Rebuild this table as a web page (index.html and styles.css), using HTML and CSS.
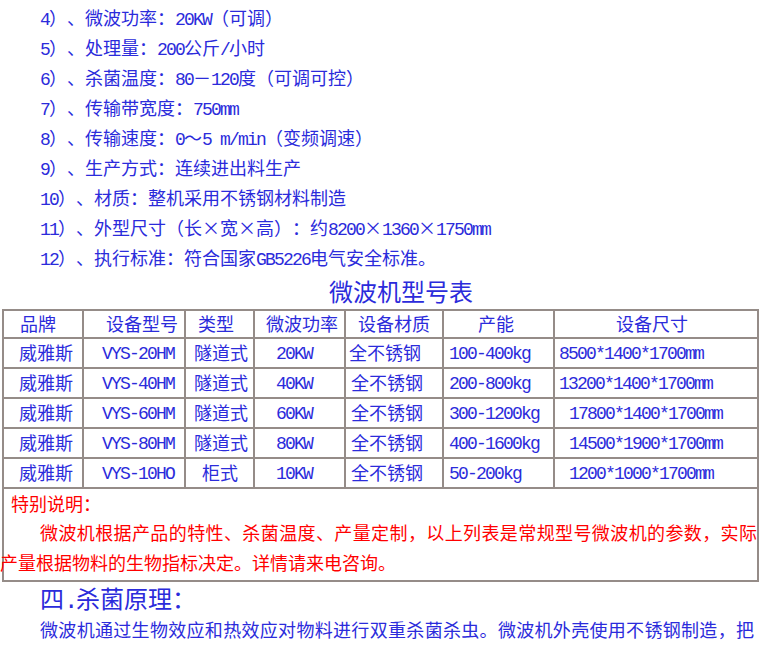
FILE: index.html
```html
<!DOCTYPE html>
<html lang="zh-CN">
<head>
<meta charset="utf-8">
<title>微波机型号表</title>
<link rel="stylesheet" href="styles.css">
</head>
<body>
<div class="specs">
  <p><span class="n">4</span>）、微波功率：<span class="n">20KW</span>（可调）</p>
  <p><span class="n">5</span>）、处理量：<span class="n">200</span>公斤<span class="n">/</span>小时</p>
  <p><span class="n">6</span>）、杀菌温度：<span class="n">80</span>－<span class="n">120</span>度（可调可控）</p>
  <p><span class="n">7</span>）、传输带宽度：<span class="n">750mm</span></p>
  <p><span class="n">8</span>）、传输速度：<span class="n">0</span>～<span class="n">5 m/min</span>（变频调速）</p>
  <p><span class="n">9</span>）、生产方式：连续进出料生产</p>
  <p><span class="n">10</span>）、材质：整机采用不锈钢材料制造</p>
  <p><span class="n">11</span>）、外型尺寸（长<span class="x">×</span>宽<span class="x">×</span>高）：约<span class="n">8200</span><span class="x">×</span><span class="n">1360</span><span class="x">×</span><span class="n">1750mm</span></p>
  <p><span class="n">12</span>）、执行标准：符合国家<span class="n">GB5226</span>电气安全标准。</p>
</div>
<h1 class="title">微波机型号表</h1>
<table class="models">
  <colgroup>
    <col class="c1"><col class="c2"><col class="c3"><col class="c4"><col class="c5"><col class="c6"><col class="c7">
  </colgroup>
  <tr class="head">
    <td>品牌</td><td>设备型号</td><td>类型</td><td>微波功率</td><td>设备材质</td><td>产能</td><td>设备尺寸</td>
  </tr>
  <tr>
    <td>威雅斯</td><td class="n">VYS-20HM</td><td>隧道式</td><td class="n">20KW</td><td>全不锈钢</td><td class="n">100-400kg</td><td class="n">8500*1400*1700mm</td>
  </tr>
  <tr>
    <td>威雅斯</td><td class="n">VYS-40HM</td><td>隧道式</td><td class="n">40KW</td><td class="shift">全不锈钢</td><td class="n">200-800kg</td><td class="n">13200*1400*1700mm</td>
  </tr>
  <tr>
    <td>威雅斯</td><td class="n">VYS-60HM</td><td>隧道式</td><td class="n">60KW</td><td class="shift">全不锈钢</td><td class="n">300-1200kg</td><td class="n wide">17800*1400*1700mm</td>
  </tr>
  <tr>
    <td>威雅斯</td><td class="n">VYS-80HM</td><td>隧道式</td><td class="n">80KW</td><td class="shift">全不锈钢</td><td class="n">400-1600kg</td><td class="n wide">14500*1900*1700mm</td>
  </tr>
  <tr>
    <td>威雅斯</td><td class="n">VYS-10HO</td><td class="cab">柜式</td><td class="n">10KW</td><td class="shift">全不锈钢</td><td class="n">50-200kg</td><td class="n wide">1200*1000*1700mm</td>
  </tr>
  <tr class="note">
    <td colspan="7">
      <p class="note-title">特别说明：</p>
      <p class="note-body">微波机根据产品的特性、杀菌温度、产量定制，以上列表是常规型号微波机的参数，实际产量根据物料的生物指标决定。详情请来电咨询。</p>
    </td>
  </tr>
</table>
<h2 class="section">四<span class="n">.</span>杀菌原理：</h2>
<p class="intro">微波机通过生物效应和热效应对物料进行双重杀菌杀虫。微波机外壳使用不锈钢制造，把</p>
</body>
</html>
```

FILE: styles.css
```css
html, body {
  margin: 0;
  padding: 0;
  background: #ffffff;
}

body {
  font-family: "Noto Sans CJK SC", sans-serif;
  font-size: 18px;
  color: #2b2bdb;
  text-spacing-trim: space-all;
}

p {
  margin: 0;
}

.n {
  font-family: "Liberation Mono", "Noto Sans CJK SC", monospace;
  letter-spacing: -0.1em;
  line-height: 1;
}

.x {
  display: inline-block;
  width: 1em;
  text-align: center;
  line-height: 1;
}

.specs {
  padding: 2px 0 0 40px;
  line-height: 30px;
}

.title {
  margin: 0;
  font-size: 24px;
  font-weight: normal;
  line-height: 37px;
  text-align: center;
  padding-left: 18px;
}

.models {
  border-collapse: collapse;
  table-layout: fixed;
  width: 756px;
  margin-left: 2px;
}

.c1 { width: 80px; }
.c2 { width: 102px; }
.c3 { width: 69px; }
.c4 { width: 91px; }
.c5 { width: 98px; }
.c6 { width: 111px; }
.c7 { width: 204px; }

.models td {
  border: 2px solid #958c88;
  height: 26px;
  padding: 0 0 2px 0;
  white-space: nowrap;
  line-height: 24px;
  vertical-align: middle;
}

.models td.n {
  padding-top: 2px;
  padding-bottom: 0;
}

.models td:nth-child(1) { padding-left: 15px; }
.models td:nth-child(2) { padding-left: 18px; }
.models td:nth-child(3) { padding-left: 8px; }
.models td:nth-child(4) { padding-left: 21px; }
.models td:nth-child(5) { padding-left: 3px; }
.models td:nth-child(6) { padding-left: 5px; }
.models td:nth-child(7) { padding-left: 4px; }

.models .head td { height: 24px; }
.models .head td:nth-child(1) { padding-left: 16px; }
.models .head td:nth-child(2) { padding-left: 22px; }
.models .head td:nth-child(3) { padding-left: 12px; }
.models .head td:nth-child(4) { padding-left: 11px; }
.models .head td:nth-child(5) { padding-left: 12px; }
.models .head td:nth-child(6) { padding-left: 34px; }
.models .head td:nth-child(7) { padding-left: 61px; }

.models td.shift { padding-left: 5px; }
.models td.wide { padding-left: 14px; }
.models td.cab { padding-left: 16px; }

.models .note td {
  height: auto;
  padding: 0 0 3px 0;
  color: #ff0000;
  line-height: 30px;
  white-space: normal;
}

.note-title {
  padding-left: 7px;
  line-height: 28px;
}

.note-body {
  margin-left: -4px;
  text-indent: 40px;
  text-align: justify;
}

.section {
  margin: 0;
  padding-left: 40px;
  font-size: 24px;
  font-weight: normal;
  line-height: 32px;
}

.intro {
  width: 714px;
  margin-left: 40px;
  line-height: 30px;
  text-align: justify;
  text-align-last: justify;
}
```
